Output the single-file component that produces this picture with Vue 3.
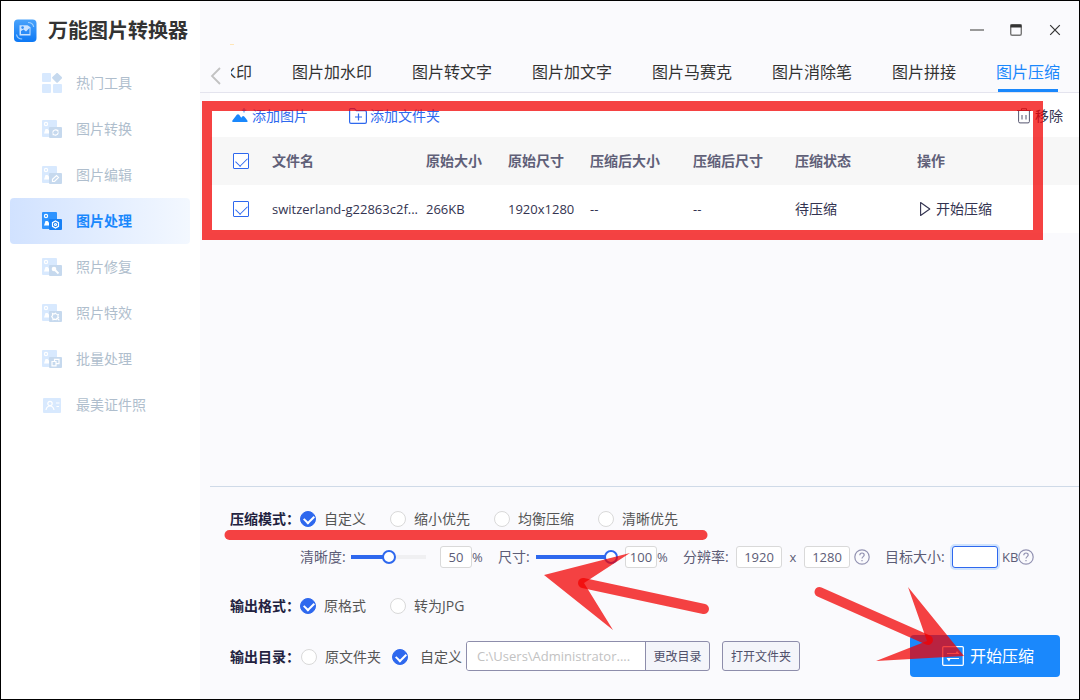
<script setup>
import { ref } from 'vue'

const menu = [
  { label: '热门工具', icon: 'grid' },
  { label: '图片转换', icon: 'convert' },
  { label: '图片编辑', icon: 'edit' },
  { label: '图片处理', icon: 'process' },
  { label: '照片修复', icon: 'repair' },
  { label: '照片特效', icon: 'effect' },
  { label: '批量处理', icon: 'batch' },
  { label: '最美证件照', icon: 'idcard' }
]
const activeMenu = ref('process')

const tabs = ['水印', '图片加水印', '图片转文字', '图片加文字', '图片马赛克', '图片消除笔', '图片拼接', '图片压缩']
const activeTab = ref('图片压缩')

const columns = ['文件名', '原始大小', '原始尺寸', '压缩后大小', '压缩后尺寸', '压缩状态', '操作']
const files = [
  { name: 'switzerland-g22863c2f...', size: '266KB', dims: '1920x1280', newSize: '--', newDims: '--', state: '待压缩' }
]

const modes = ['自定义', '缩小优先', '均衡压缩', '清晰优先']
const mode = ref('自定义')
const formats = ['原格式', '转为JPG']
const format = ref('原格式')
const dir = ref('custom')
const quality = ref(50)
const scale = ref(100)
const width = ref('1920')
const height = ref('1280')
const target = ref('')
const path = ref('C:\\Users\\Administrator....')
</script>

<template>
  <div class="window">
    <aside class="sidebar">
      <div class="brand">
        <svg class="logo" viewBox="0 0 24 24" aria-hidden="true">
          <defs>
            <linearGradient id="logoFill" x1="0" y1="0" x2="0" y2="1">
              <stop offset="0" stop-color="#4aa3fb" />
              <stop offset="1" stop-color="#0c78f5" />
            </linearGradient>
          </defs>
          <rect x="1" y="0.5" width="22.500" height="22.500" rx="4" fill="url(#logoFill)" />
          <path d="M6.500 6.200h8l3 2v8.300H6.500z" fill="#c9e2ff" />
          <path d="M8 15v-3l2.500-1.500 2.500 2 3.500-3.500v6z" fill="#2b8cf8" />
          <circle cx="9.600" cy="8.600" r="1.300" fill="#2b8cf8" />
          <path d="M15 3.500c3 0 5.200 1.800 5.700 4.500M3.500 15.500c.5 2.700 2.700 4.500 5.700 4.500" fill="none" stroke="#9fd0ff" stroke-width="1.200" />
        </svg>
        <h1>万能图片转换器</h1>
      </div>
      <nav class="menu">
        <button
          v-for="m in menu"
          :key="m.icon"
          type="button"
          class="menu-item"
          :class="{ active: activeMenu === m.icon }"
          @click="activeMenu = m.icon"
        >
          <svg class="menu-icon" viewBox="0 0 20 20" aria-hidden="true">
            <template v-if="m.icon === 'grid'">
              <rect class="base" x="0" y="0" width="9" height="9" rx="1" />
              <rect class="base" x="0" y="11" width="9" height="9" rx="1" />
              <rect class="base" x="11" y="11" width="9" height="9" rx="1" />
              <rect class="badge" x="11.300" y="1" width="7.600" height="7.600" rx="1" transform="rotate(45 15.100 4.800)" />
            </template>
            <template v-else-if="m.icon === 'idcard'">
              <rect class="base" x="1" y="3" width="18" height="15" rx="1" />
              <circle cx="8" cy="8.500" r="2.200" class="line" />
              <path d="M4 15c.5-3 2-4 4-4s3.500 1 4 4M14 8h3.500M14.500 11.500h2.500" class="line" />
            </template>
            <template v-else>
              <rect class="base" x="0" y="1" width="15" height="17" rx="1" />
              <circle cx="4" cy="5" r="1.600" class="line" />
              <path d="M2 14.500l1.500-4.500h2l1.500 1.500v3z" fill="#fff" />
              <rect class="badge" x="7" y="8" width="13" height="11" rx="1" />
              <path v-if="m.icon === 'convert'" class="line" d="M10.800 13.500a2.800 2.800 0 0 1 5-1.500v-1.200M16.200 13.500a2.800 2.800 0 0 1-5 1.500v1.200" />
              <path v-else-if="m.icon === 'edit'" class="line" d="M10.500 16.500v-2.200l4-3.800 2 2-4 4z" />
              <g v-else-if="m.icon === 'process'">
                <path class="line" d="M13.500 10l3 1.700v3.600l-3 1.700-3-1.700v-3.600z" />
                <circle class="line" cx="13.500" cy="13.500" r="1" />
              </g>
              <g v-else-if="m.icon === 'repair'">
                <circle cx="12" cy="12" r="2.300" fill="#fff" />
                <path d="M12 12l4.500 4.500" stroke="#fff" stroke-width="1.800" />
              </g>
              <path v-else-if="m.icon === 'effect'" class="line" d="M10.500 10.500l1.500.6 1.500-.8 1 1 1.800.2-.5 1.700.7 1.300-1.500.8-.8 1.300-1.700-.5-1.500.5-.3-1.700-1-1.200.9-1.400zM15.500 15.500l1.800 1.800" />
              <path v-else class="line" d="M10 12.500h4v4.300h-4zM12.500 12.500v-2.200H17v4.400h-3" />
            </template>
          </svg>
          <span>{{ m.label }}</span>
        </button>
      </nav>
    </aside>

    <main class="main">
      <header class="titlebar">
        <button type="button" class="win-btn" aria-label="最小化">
          <svg viewBox="0 0 14 14"><path d="M0 7h14" stroke="#999" stroke-width="2" /></svg>
        </button>
        <button type="button" class="win-btn" aria-label="最大化">
          <svg viewBox="0 0 14 14">
            <rect x="1.700" y="1.700" width="10.600" height="10.600" rx="1.500" fill="none" stroke="#777" stroke-width="1.400" />
            <path d="M1.500 1.500h11v3h-11z" fill="#333" />
          </svg>
        </button>
        <button type="button" class="win-btn" aria-label="关闭">
          <svg viewBox="0 0 14 14"><path d="M2.200 2.200l9.600 9.600M11.800 2.200l-9.600 9.600" stroke="#333" stroke-width="1.200" /></svg>
        </button>
      </header>

      <div class="tabbar">
        <button type="button" class="prev" aria-label="向左">
          <svg viewBox="0 0 12 18"><path d="M10 1L2 9l8 8" fill="none" stroke="#c2c2c2" stroke-width="1.800" /></svg>
        </button>
        <nav class="tabs">
          <button
            v-for="t in tabs"
            :key="t"
            type="button"
            class="tab"
            :class="{ active: activeTab === t }"
            @click="activeTab = t"
          >{{ t }}</button>
        </nav>
      </div>

      <section class="content">
        <div class="toolbar">
          <button type="button" class="tool blue">
            <svg class="i16" viewBox="0 0 16 16">
              <path d="M1 14c-.9 0-1-.8-.6-1.400C2 10.500 3.500 8.500 4.800 6.800c.7-.9 1.700-.9 2.400 0L9.200 9.800l1-1.200c.7-.7 1.400-.7 2 0 1.200 1.400 2.300 2.700 3.300 4.200.4.700.2 1.200-.6 1.200z" fill="#1a88fc" />
              <path d="M12 0v4.500M9.800 2.200h4.500" stroke="#1a88fc" stroke-width="1" />
            </svg>
            <span>添加图片</span>
          </button>
          <button type="button" class="tool blue folder">
            <svg class="i18" viewBox="0 0 18 16">
              <path d="M.6 14V1.600q0-1 1-1h3.800l2 2H16q1.400 0 1.400 1.400v10q0 1.400-1.400 1.400H2Q.6 15.400.6 14z" fill="none" stroke="#2e68ee" stroke-width="1.200" />
              <path d="M9.500 5.500v7M6 9h7" stroke="#2e68ee" stroke-width="1.200" />
            </svg>
            <span>添加文件夹</span>
          </button>
          <button type="button" class="tool remove">
            <svg class="i14" viewBox="0 0 14 16">
              <path d="M1.600 3v10.500q0 1.400 1.400 1.400h8q1.400 0 1.400-1.400V3M0 2.500h14M4.500 2.500V.7h5v1.800M5 7v4.500M9 7v4.500" fill="none" stroke="#55556f" stroke-width="1" />
            </svg>
            <span>移除</span>
          </button>
        </div>

        <table class="files">
          <colgroup>
            <col class="c-check" /><col class="c-name" /><col class="c-size" /><col class="c-size" />
            <col class="c-new" /><col class="c-dims" /><col class="c-state" /><col />
          </colgroup>
          <thead>
            <tr>
              <th class="check"><input type="checkbox" checked aria-label="全选" /></th>
              <th v-for="c in columns" :key="c">{{ c }}</th>
            </tr>
          </thead>
          <tbody>
            <tr v-for="f in files" :key="f.name">
              <td class="check"><input type="checkbox" checked :aria-label="f.name" /></td>
              <td>{{ f.name }}</td>
              <td>{{ f.size }}</td>
              <td>{{ f.dims }}</td>
              <td>{{ f.newSize }}</td>
              <td>{{ f.newDims }}</td>
              <td class="cjk">{{ f.state }}</td>
              <td>
                <button type="button" class="start-row">
                  <svg viewBox="0 0 12 16"><path d="M1.600 1.500v13L10.800 8z" fill="none" stroke="#333350" stroke-width="1.100" stroke-linejoin="round" /></svg>
                  <span>开始压缩</span>
                </button>
              </td>
            </tr>
          </tbody>
        </table>
      </section>

      <form class="panel" @submit.prevent>
        <div class="row" role="radiogroup" aria-label="压缩模式">
          <span class="title">压缩模式：</span>
          <label v-for="m in modes" :key="m" class="opt">
            <input v-model="mode" type="radio" name="mode" :value="m" /><span>{{ m }}</span>
          </label>
        </div>

        <div class="row fields">
          <label for="quality" class="w51">清晰度:</label>
          <input id="quality" v-model="quality" type="range" :style="{ '--fill': quality + '%' }" />
          <input v-model="quality" class="num small" type="text" aria-label="清晰度百分比" />
          <span class="pct">%</span>
          <label for="scale" class="w38">尺寸:</label>
          <input id="scale" v-model="scale" type="range" :style="{ '--fill': scale + '%' }" />
          <input v-model="scale" class="num small" type="text" aria-label="尺寸百分比" />
          <span class="pct">%</span>
          <label for="w" class="w53">分辨率:</label>
          <input id="w" v-model="width" class="num" type="text" />
          <span class="times">x</span>
          <input v-model="height" class="num" type="text" aria-label="高度" />
          <svg class="help gap" viewBox="0 0 16 16"><circle cx="8" cy="8" r="7.200" /><path d="M5.800 6.300c0-3 4.400-3 4.400-.3 0 1.600-2.200 1.700-2.200 3.600M8 11v1.300" /></svg>
          <label for="target" class="w67">目标大小:</label>
          <input id="target" v-model="target" class="num focus" type="text" />
          <span class="kb">KB</span>
          <svg class="help" viewBox="0 0 16 16"><circle cx="8" cy="8" r="7.200" /><path d="M5.800 6.300c0-3 4.400-3 4.400-.3 0 1.600-2.200 1.700-2.200 3.600M8 11v1.300" /></svg>
        </div>

        <div class="row format" role="radiogroup" aria-label="输出格式">
          <span class="title">输出格式：</span>
          <label v-for="f in formats" :key="f" class="opt">
            <input v-model="format" type="radio" name="format" :value="f" /><span>{{ f }}</span>
          </label>
        </div>

        <div class="row output">
          <span class="title">输出目录：</span>
          <label class="opt source"><input v-model="dir" type="radio" name="dir" value="source" /><span>原文件夹</span></label>
          <label class="opt custom"><input v-model="dir" type="radio" name="dir" value="custom" /><span>自定义</span></label>
          <div class="path">
            <input v-model="path" type="text" aria-label="输出目录" />
            <button type="button">更改目录</button>
          </div>
          <button type="button" class="open">打开文件夹</button>
          <button type="submit" class="start">
            <svg viewBox="0 0 22 20">
              <rect x=".7" y=".7" width="20.600" height="18.600" rx="1" fill="none" stroke="#fff" stroke-width="1.300" />
              <path d="M5 7.500h12M5 12.500h12" stroke="#fff" stroke-width="1.200" />
              <path d="M17.500 8H13l2-3zM4.500 12H9l-2 3.500z" fill="#fff" />
            </svg>
            <span>开始压缩</span>
          </button>
        </div>
      </form>
    </main>

    <svg class="marks" viewBox="0 0 1080 700" aria-hidden="true">
      <path d="M230 44.500h4" stroke="#ffe6b8" />
      <g fill="none" stroke="#f20000" stroke-width="10" stroke-opacity=".74">
        <rect x="207" y="106" width="831" height="129" />
        <path d="M229.500 535h473" stroke-linecap="round" />
        <path d="M583 583l121 26" stroke-linecap="round" />
        <path d="M819.500 592L928 640" stroke-linecap="round" />
      </g>
      <g fill="#f20000" fill-opacity=".74">
        <path d="M544 575l86-22-46 30 29 47z" />
        <path d="M908 587l56 69-88 5 51-20z" />
      </g>
    </svg>
  </div>
</template>

<style>
body {
  margin: 0;
}
</style>

<style scoped>
* {
  box-sizing: border-box;
}
.window {
  position: relative;
  display: flex;
  min-height: 100vh;
  border: 1px solid #000;
  background: #fafafd;
  color: #333;
  font-family: "Open Sans", "Noto Sans CJK SC", sans-serif;
  font-size: 14px;
  line-height: 20px;
  overflow: hidden;
}
button,
input {
  font: inherit;
  color: inherit;
}
button {
  border: 0;
  padding: 0;
  background: none;
  white-space: nowrap;
}
svg {
  display: block;
  flex: none;
}
.sidebar {
  flex: none;
  width: 199px;
  background: #fff;
}
.brand {
  display: flex;
  align-items: center;
  gap: 11px;
  height: 59px;
  padding-left: 12px;
}
.logo {
  width: 24px;
  height: 24px;
}
h1 {
  margin: 0;
  font-size: 20px;
  line-height: 28px;
  font-weight: 700;
  color: #333;
  white-space: nowrap;
}
.menu {
  display: flex;
  flex-direction: column;
  padding: 0 10px 0 9px;
}
.menu-item {
  display: flex;
  align-items: center;
  gap: 14px;
  height: 46px;
  padding-left: 32px;
  border-radius: 4px;
  color: #afbecd;
}
.menu-item.active {
  background: linear-gradient(to right, #d1e2ff, #f3f8ff);
  color: #1a88fc;
  font-weight: 700;
}
.menu-icon {
  width: 20px;
  height: 20px;
}
.base {
  fill: #d8e9fe;
}
.badge {
  fill: #c6d9ee;
}
.active .base {
  fill: #2e93ff;
}
.active .badge {
  fill: #1780f5;
}
.line {
  fill: none;
  stroke: #fff;
  stroke-width: 1.2px;
}
.main {
  flex: 1;
  min-width: 0;
  display: flex;
  flex-direction: column;
}
.titlebar {
  display: flex;
  justify-content: flex-end;
  align-items: center;
  gap: 25px;
  height: 53px;
  padding: 5px 17px 0 0;
}
.win-btn svg {
  width: 14px;
  height: 14px;
}
.tabbar {
  display: flex;
  height: 39px;
  border-bottom: 1px solid #e4e4ee;
}
.prev {
  flex: none;
  width: 31px;
  padding: 6px 0 0 10px;
}
.prev svg {
  width: 12px;
  height: 18px;
}
.tabs {
  flex: 1;
  min-width: 0;
  display: flex;
  justify-content: flex-end;
  gap: 40px;
  padding-right: 19px;
  overflow: hidden;
}
.tab {
  position: relative;
  flex: none;
  padding-bottom: 2px;
  font-size: 16px;
  color: #333;
}
.tab.active {
  color: #1a88fc;
}
.tab.active::after {
  content: "";
  position: absolute;
  left: 2px;
  right: 2px;
  bottom: 0;
  height: 3px;
  background: #1a88fc;
}
.content {
  flex: 1;
  margin-left: 10px;
}
.toolbar {
  display: flex;
  align-items: center;
  height: 44px;
  padding: 2px 16px 0 22px;
  background: #fff;
}
.tool {
  display: flex;
  align-items: center;
  gap: 4px;
}
.blue {
  color: #2e68ee;
}
.folder {
  gap: 3px;
  margin-left: 41px;
}
.remove {
  margin-left: auto;
  color: #333350;
}
.i14 {
  width: 14px;
  height: 16px;
}
.i16 {
  width: 16px;
  height: 16px;
}
.i18 {
  width: 18px;
  height: 16px;
}
.files {
  width: 100%;
  table-layout: fixed;
  border-collapse: collapse;
}
.c-check {
  width: 62px;
}
.c-name {
  width: 154px;
}
.c-size {
  width: 82px;
}
.c-new {
  width: 103px;
}
.c-dims {
  width: 102px;
}
.c-state {
  width: 122px;
}
th,
td {
  height: 48px;
  padding: 0;
  text-align: left;
  white-space: nowrap;
}
th {
  background: #f7f7f7;
  color: #606078;
}
td {
  background: #fff;
  color: #333350;
  font-size: 13px;
}
td.cjk {
  font-size: 14px;
}
.check {
  padding-left: 23px;
}
input[type="checkbox"],
input[type="radio"] {
  appearance: none;
  position: relative;
  display: block;
  flex: none;
  width: 16px;
  height: 16px;
  margin: 0;
  border: 1px solid #d9d9d9;
  background: #fff;
}
input[type="checkbox"] {
  border-color: #2e68ee;
  border-radius: 1px;
}
input[type="radio"] {
  border-radius: 50%;
}
input[type="radio"]:checked {
  border-color: #2e68ee;
  background: #2e68ee;
}
input[type="checkbox"]:checked::after,
input[type="radio"]:checked::after {
  content: "";
  position: absolute;
  left: 2px;
  top: 3px;
  width: 10px;
  height: 6px;
  border: solid #2e68ee;
  border-width: 0 0 1px 1px;
  transform: rotate(-45deg);
}
input[type="radio"]:checked::after {
  left: 3px;
  width: 8px;
  height: 5px;
  border-color: #fff;
  border-width: 0 0 2px 2px;
}
.start-row {
  display: flex;
  align-items: center;
  gap: 5px;
  padding-left: 2px;
  font-size: 14px;
}
.start-row svg {
  width: 12px;
  height: 16px;
}
.panel {
  margin-left: 10px;
  padding: 16px 19px 22px 20px;
  border-top: 1px solid #cfdae8;
}
.row {
  display: flex;
  align-items: center;
  height: 32px;
}
.title {
  flex: none;
  width: 70px;
  color: #222240;
  font-weight: 700;
  white-space: nowrap;
}
.opt {
  display: flex;
  align-items: center;
  gap: 8px;
  margin-right: 24px;
  color: #555;
  white-space: nowrap;
}
.fields {
  margin-top: 6px;
  padding-left: 70px;
  color: #5c5c76;
}
.fields > * {
  flex: none;
}
.w51 {
  width: 51px;
}
.w38 {
  width: 38px;
}
.w53 {
  width: 53px;
}
.w67 {
  width: 67px;
}
input[type="range"] {
  appearance: none;
  width: 89px;
  height: 14px;
  margin: 0 7px 0 -7px;
  background: linear-gradient(to right, #2e68ee var(--fill), #f0f0f2 var(--fill)) center / calc(100% - 14px) 4px no-repeat;
}
input[type="range"]::-webkit-slider-thumb {
  appearance: none;
  width: 14px;
  height: 14px;
  border: 2px solid #2e68ee;
  border-radius: 50%;
  background: #fff;
}
.num {
  width: 46px;
  height: 22px;
  padding: 0;
  border: 1px solid #d9d9d9;
  border-radius: 3px;
  background: #fff;
  font-size: 13px;
  text-align: center;
  outline: 0;
}
.small {
  width: 32px;
}
.focus {
  border-color: #2e68ee;
  box-shadow: 0 0 0 2px #cfe3fd;
}
.pct {
  width: 26px;
  font-size: 13px;
}
.times {
  width: 22px;
  font-size: 13px;
  text-align: center;
}
.kb {
  width: 20px;
  padding-left: 4px;
  font-size: 13px;
}
.help {
  width: 16px;
  height: 16px;
  fill: none;
  stroke: #9292b2;
  stroke-width: 1.2px;
}
.gap {
  margin: 0 15px 0 4px;
}
.format {
  margin-top: 17px;
}
.output {
  height: 42px;
  margin-top: 13px;
}
.output > .title,
.output > .opt {
  padding-top: 2px;
}
.source {
  margin: 0 11px 0 1px;
}
.custom {
  gap: 12px;
  margin-right: 4px;
}
.path {
  display: flex;
  flex: none;
  width: 244px;
  height: 30px;
  border: 1px solid #8d8dab;
  border-radius: 3px;
  background: #f4f5fa;
  overflow: hidden;
}
.path input {
  flex: 1;
  min-width: 0;
  padding: 0 10px;
  border: 0;
  background: #fff;
  color: #c2c2c2;
  font-size: 13px;
  outline: 0;
}
.path button,
.open {
  padding-top: 2px;
  color: #50506a;
  font-size: 12px;
}
.path button {
  width: 64px;
  border-left: 1px solid #8d8dab;
}
.open {
  flex: none;
  width: 78px;
  height: 30px;
  margin-left: 12px;
  border: 1px solid #8d8dab;
  border-radius: 3px;
  background: #f4f5fa;
}
.start {
  display: flex;
  align-items: center;
  gap: 6px;
  flex: none;
  width: 150px;
  height: 42px;
  margin-left: auto;
  padding-left: 32px;
  border-radius: 4px;
  background: #1a88fc;
  color: #fff;
  font-size: 16px;
}
.start svg {
  width: 22px;
  height: 20px;
}
.marks {
  position: absolute;
  left: -1px;
  top: -1px;
  width: 1080px;
  height: 700px;
  pointer-events: none;
}
</style>
